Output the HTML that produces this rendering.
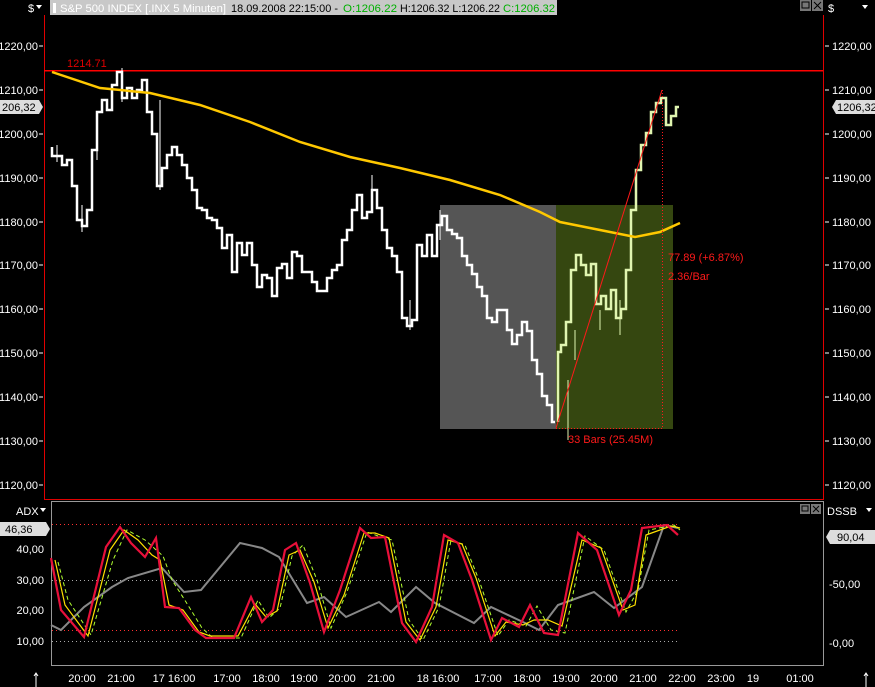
<!DOCTYPE html>
<html><head><meta charset="utf-8"><style>
html,body{margin:0;padding:0;background:#000;width:875px;height:687px;overflow:hidden}
svg{display:block}
text{font-family:"Liberation Sans",sans-serif;font-size:11px}
</style></head><body>
<svg width="875" height="687" viewBox="0 0 875 687" xmlns="http://www.w3.org/2000/svg">
<rect width="875" height="687" fill="#000"/>
<!-- header -->
<rect x="50" y="0" width="507" height="15" fill="#c8c8c8"/>
<rect x="53" y="3" width="3" height="10" fill="#fff"/>
<text x="60" y="12" fill="#fff" textLength="166" lengthAdjust="spacingAndGlyphs">S&amp;P 500 INDEX [.INX  5 Minuten]</text>
<text x="231" y="12" fill="#000" textLength="107" lengthAdjust="spacingAndGlyphs">18.09.2008 22:15:00 -</text>
<text x="343" y="12" fill="#00b000" textLength="54" lengthAdjust="spacingAndGlyphs">O:1206.22</text>
<text x="400" y="12" fill="#000" textLength="100" lengthAdjust="spacingAndGlyphs">H:1206.32 L:1206.22</text>
<text x="503" y="12" fill="#00b000" textLength="52" lengthAdjust="spacingAndGlyphs">C:1206.32</text>
<text x="28" y="12" fill="#fff">$</text><path d="M36 5h6l-3 4z" fill="#fff"/>
<text x="828" y="12" fill="#fff">$</text><path d="M862 5h6l-3 4z" fill="#fff"/>
<rect x="800" y="0" width="11" height="11" fill="#777"/><rect x="812" y="0" width="11" height="11" fill="#777"/>
<rect x="802" y="2" width="7" height="6" fill="none" stroke="#000"/>
<path d="M814 2l7 7M821 2l-7 7" stroke="#000"/>
<!-- main panel frame -->
<path d="M44.5 15V499.5H823.5V15" fill="none" stroke="#e00000"/>
<!-- gray & green boxes -->
<rect x="440" y="205" width="116" height="224" fill="#555"/>
<rect x="556" y="205" width="117" height="224" fill="#354710"/>
<!-- resistance line -->
<rect x="44" y="70" width="779" height="1.5" fill="#ff0000"/>
<text x="67" y="67" fill="#e00000" font-size="10">1214.71</text>
<!-- price path -->
<path fill="none" stroke="#fff" stroke-width="2.5" d="M52 147V156H57V156H62V165H67V160H72V186H77V220H82V226H87V210H92V150H97V112H102V100H107V110H112V85H117V72H122V98H127V88H132V98H137V90H142V80H147V112H152V134H157V186H162V168H167V155H172V147H177V155H182V165H187V178H192V190H197V208H202V210H207V218H212V220H217V228H222V248H227V235H232V272H237V243H242V255H247V243H252V265H257V287H262V275H267V278H272V296H277V268H282V264H287V278H292V252H297V256H302V272H307V272H312V282H317V291H322V291H327V278H332V270H337V265H342V240H347V230H352V210H357V195H362V218H367V212H372V190H377V208H382V230H387V248H392V256H397V272H402V318H407V326H412V320H417V245H422V256H427V235H432V256H437V225H442V216H447V230H452V234H457V238H462V256H467V265H472V274H477V287H482V296H487V318H492V322H497V310H502V310H507V330H512V344H517V335H522V322H527V331H532V360H537V374H542V396H547V405H552V422H555"/>
<path fill="none" stroke="#fff" stroke-width="1" d="M57 145V162M82 205V232M97 115V160M122 68V102M160 100V190M372 175V200M410 300V330M440 210V240"/>
<path fill="none" stroke="#e0f5b0" stroke-width="2.5" d="M558 422V352H561V345H566V322H571V270H576V255H581V265H586V275H591V264H596V304H601V296H606V309H611V290H616V318H621V309H626V270H631V210H636V170H641V145H646V133H651V112H656V103H661V98H666V125H671V116H676V107H679"/>
<path fill="none" stroke="#e0f5b0" d="M568 380V440M575 330V360M600 310V330M620 300V335"/>
<!-- MA -->
<polyline fill="none" stroke="#ffc800" stroke-width="2.5" points="52,72 100,88 150,93 200,105 250,122 300,142 350,157 400,168 450,180 500,195 540,212 560,222 600,230 635,237 660,232 680,223"/>
<!-- red measure lines -->
<line x1="556" y1="428" x2="662" y2="90" stroke="#ff1a1a"/>
<line x1="662.5" y1="90" x2="662.5" y2="429" stroke="#ff1a1a" stroke-dasharray="1,2"/>
<line x1="556" y1="428.5" x2="662" y2="428.5" stroke="#ff1a1a" stroke-dasharray="1,2"/>
<text x="668" y="261" fill="#ff1a1a" font-size="10">77.89 (+6.87%)</text>
<text x="668" y="280" fill="#ff1a1a" font-size="10">2.36/Bar</text>
<text x="568" y="443" fill="#ff1a1a" font-size="10">33 Bars (25.45M)</text>
<!-- left axis labels -->
<g fill="#fff" text-anchor="end" font-size="11">
<text x="38" y="50">1220,00</text><text x="38" y="182">1190,00</text><text x="38" y="226">1180,00</text><text x="38" y="269">1170,00</text><text x="38" y="313">1160,00</text><text x="38" y="357">1150,00</text><text x="38" y="401">1140,00</text><text x="38" y="445">1130,00</text><text x="38" y="489">1120,00</text><text x="38" y="138">1200,00</text><text x="38" y="94">1210,00</text>
</g>
<g fill="#fff" font-size="11">
<text x="832" y="50">1220,00</text><text x="832" y="94">1210,00</text><text x="832" y="138">1200,00</text><text x="832" y="182">1190,00</text><text x="832" y="226">1180,00</text><text x="832" y="269">1170,00</text><text x="832" y="313">1160,00</text><text x="832" y="357">1150,00</text><text x="832" y="401">1140,00</text><text x="832" y="445">1130,00</text><text x="832" y="489">1120,00</text>
</g>
<path d="M0 100H39L43 107L39 114H0Z" fill="#ddd"/><text x="2" y="111" fill="#000">206,32</text>
<path d="M832 107L836 100H875V114H836Z" fill="#ddd"/><text x="837" y="111" fill="#000">1206,32</text>
<g stroke="#fff"><path d="M39 46h4M39 90h4M39 134h4M39 178h4M39 222h4M39 265h4M39 309h4M39 353h4M39 397h4M39 441h4M39 485h4M825 46h4M825 90h4M825 134h4M825 178h4M825 222h4M825 265h4M825 309h4M825 353h4M825 397h4M825 441h4M825 485h4"/></g>
<!-- indicator panel -->
<path d="M51.5 501.5H823.5V665.5H51.5Z" fill="none" stroke="#999"/>
<rect x="800" y="504" width="10" height="10" fill="#777"/><rect x="811" y="504" width="10" height="10" fill="#777"/>
<rect x="802" y="506" width="6" height="5" fill="none" stroke="#000"/><path d="M813 506l6 6M819 506l-6 6" stroke="#000"/>
<text x="16" y="515" fill="#fff" font-size="10">ADX</text><path d="M40 508h6l-3 4z" fill="#fff"/>
<text x="827" y="515" fill="#fff" font-size="10">DSSB</text><path d="M866 508h6l-3 4z" fill="#fff"/>
<path d="M0 522H46L50 529L46 536H0Z" fill="#ddd"/><text x="5" y="533" fill="#000">46,36</text>
<path d="M826 537L830 530H875V544H830Z" fill="#ddd"/><text x="837" y="541" fill="#000">90,04</text>
<g fill="#fff" text-anchor="end"><text x="44" y="553">40,00</text><text x="44" y="584">30,00</text><text x="44" y="614">20,00</text><text x="44" y="645">10,00</text></g>
<g fill="#fff"><text x="829" y="588">-50,00</text><text x="829" y="647">-0,00</text></g>
<g fill="none" stroke-dasharray="1,3">
<line x1="52" y1="524.5" x2="680" y2="524.5" stroke="#ff3030"/>
<line x1="52" y1="630.5" x2="680" y2="630.5" stroke="#ff3030"/>
<line x1="52" y1="580.5" x2="680" y2="580.5" stroke="#aaa"/>
<line x1="52" y1="641.5" x2="680" y2="641.5" stroke="#aaa"/>
</g>
<polyline fill="none" stroke="#888" stroke-width="2" points="51,625 61,630 84,607 112,587 128,578 162,568 184,592 201,590 240,543 262,548 279,557 307,603 324,597 346,617 379,602 391,612 416,587 435,603 474,623 491,607 525,623 539,630 558,605 594,592 614,608 642,587 664,525 678,528"/>
<polyline fill="none" stroke="#b0ff30" stroke-dasharray="4,3" points="58,562 68,600 91,635 113,560 127,530 145,540 163,556 172,580 186,602 202,628 213,638 241,638 258,600 269,618 280,608 292,556 303,545 317,580 331,628 347,592 367,532 378,536 392,540 409,620 423,640 439,607 451,540 465,545 479,580 498,636 509,620 526,626 537,606 551,630 565,633 585,536 604,550 626,612 638,590 649,530 674,525 680,530"/>
<polyline fill="none" stroke="#ffe000" stroke-width="1.2" points="55,560 65,605 88,636 110,550 124,530 138,540 152,555 160,560 169,605 183,610 199,632 210,636 238,636 255,604 266,617 277,611 289,555 300,550 314,582 328,628 344,595 364,533 375,533 389,538 406,622 420,640 436,607 448,540 462,544 476,578 495,636 506,622 523,625 534,620 548,620 562,626 582,540 601,548 623,610 635,605 646,535 671,526 680,528"/>
<polyline fill="none" stroke="#e8103a" stroke-width="2.2" points="51,558 61,610 84,637 106,547 120,527 131,543 145,557 156,538 165,607 179,608 195,630 206,638 234,638 251,597 262,622 273,610 285,550 296,543 310,583 324,632 340,590 360,528 371,538 385,537 402,623 416,642 432,607 444,535 458,543 472,580 491,640 502,618 519,627 530,605 544,633 558,635 578,533 597,550 619,615 631,590 642,528 667,525 678,535"/>
<!-- time axis -->
<g fill="#fff" font-size="11" text-anchor="middle">
<text x="82" y="682">20:00</text><text x="121" y="682">21:00</text><text x="174" y="682">17 16:00</text><text x="227" y="682">17:00</text><text x="266" y="682">18:00</text><text x="304" y="682">19:00</text><text x="342" y="682">20:00</text><text x="381" y="682">21:00</text><text x="438" y="682">18 16:00</text><text x="488" y="682">17:00</text><text x="527" y="682">18:00</text><text x="566" y="682">19:00</text><text x="604" y="682">20:00</text><text x="643" y="682">21:00</text><text x="682" y="682">22:00</text><text x="721" y="682">23:00</text><text x="753" y="682">19</text><text x="800" y="682">01:00</text>
</g>
<path d="M36 687V673M34 676l2-3 2 3M866 687V673M864 676l2-3 2 3" stroke="#fff" fill="none"/>
</svg>
</body></html>
